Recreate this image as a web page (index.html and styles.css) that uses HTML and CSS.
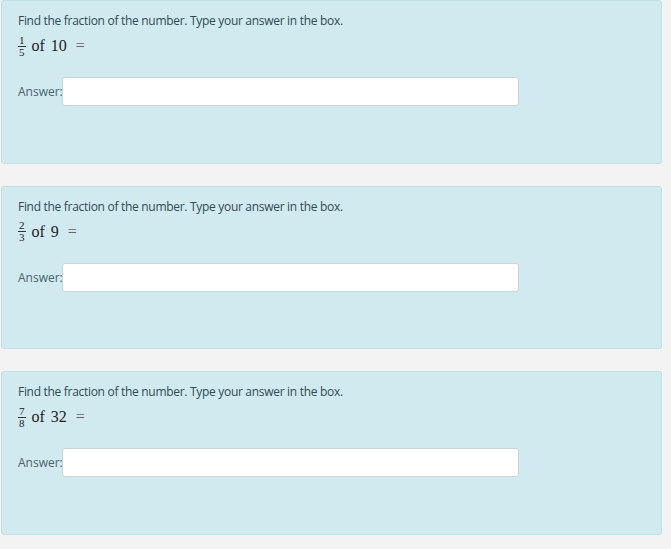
FILE: index.html
```html
<!DOCTYPE html>
<html lang="en">
<head>
    <meta charset="UTF-8">
    <title>Fractions of numbers</title>
    <link rel="stylesheet" href="styles.css">
</head>
<body>

    <div class="question">
        <div class="prompt">Find the fraction of the number. Type your answer in the box.</div>
        <div class="math">
            <span class="frac"><span class="num">1</span><span class="den">5</span></span>
            <span class="word">of</span> <span>10</span> <span class="eq">=</span>
        </div>
        <div class="answer">
            <label>Answer:</label>
            <input type="text">
        </div>
    </div>

    <div class="question">
        <div class="prompt">Find the fraction of the number. Type your answer in the box.</div>
        <div class="math">
            <span class="frac"><span class="num">2</span><span class="den">3</span></span>
            <span class="word">of</span> <span>9</span> <span class="eq">=</span>
        </div>
        <div class="answer">
            <label>Answer:</label>
            <input type="text">
        </div>
    </div>

    <div class="question">
        <div class="prompt">Find the fraction of the number. Type your answer in the box.</div>
        <div class="math">
            <span class="frac"><span class="num">7</span><span class="den">8</span></span>
            <span class="word">of</span> <span>32</span> <span class="eq">=</span>
        </div>
        <div class="answer">
            <label>Answer:</label>
            <input type="text">
        </div>
    </div>

</body>
</html>
```

FILE: styles.css
```css
body {
    margin: 0;
    padding: 0 9px 0 1px;
    background: #f3f3f3;
    font-family: "Open Sans", "Noto Sans", sans-serif;
    font-size: 12px;
    color: #2f4b50;
}

.question {
    height: 163.5px;
    box-sizing: border-box;
    margin-bottom: 22px;
    padding: 11px 16px;
    background: #d1eaf0;
    border: 1px solid #c2dfe6;
    border-radius: 3px;
}

.prompt {
    line-height: 18px;
    letter-spacing: -0.3px;
}

.math {
    display: flex;
    align-items: center;
    gap: 6px;
    margin-top: 4px;
    height: 24px;
    font-family: "Liberation Serif", serif;
    font-size: 16px;
    color: #222;
}

.frac {
    display: inline-flex;
    flex-direction: column;
    align-items: center;
    font-size: 11px;
    line-height: 11px;
}

.frac .num {
    border-bottom: 1px solid #333;
    padding: 0 1px;
}

.eq {
    color: #666;
    margin-left: 3px;
}

.answer {
    display: flex;
    align-items: center;
    margin-top: 19px;
}

.answer label {
    width: 44px;
    color: #4a6468;
}

.answer input {
    width: 457px;
    height: 29px;
    box-sizing: border-box;
    border: 1px solid #c9d4d7;
    border-radius: 3px;
    background: #fff;
}
```
